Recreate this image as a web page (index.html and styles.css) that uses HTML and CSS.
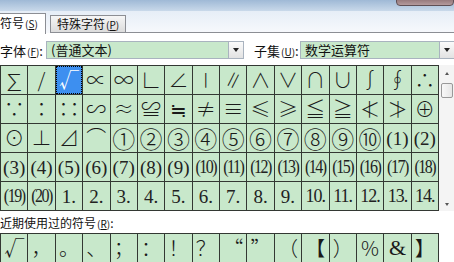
FILE: index.html
```html
<!DOCTYPE html>
<html>
<head>
<meta charset="utf-8">
<link rel="stylesheet" href="styles.css">
</head>
<body>
<div class="titlebar"><div class="closebtn"></div></div>
<div class="tabs">
  <div class="tab active">符号<span class="key">(<u>S</u>)</span></div>
  <div class="tab">特殊字符<span class="key">(<u>P</u>)</span></div>
  <div class="tabfill"></div>
</div>
<div class="panel">
  <div class="fontrow">
    <span class="lbl">字体<span class="key">(<u>F</u>)</span>:</span>
    <div class="combo c1"><div class="field">(普通文本)</div><div class="btn"><span class="tri"></span></div></div>
    <span class="lbl lbl2">子集<span class="key">(<u>U</u>)</span>:</span>
    <div class="combo c2"><div class="field">数学运算符</div><div class="btn"><span class="tri"></span></div></div>
  </div>
  <div class="gridwrap">
    <div class="grid">
      <div class="cell big">∑</div><div class="cell">/</div><div class="cell sel">√</div><div class="cell">∝</div><div class="cell">∞</div><div class="cell">∟</div><div class="cell">∠</div><div class="cell">∣</div><div class="cell">∥</div><div class="cell">∧</div><div class="cell">∨</div><div class="cell">∩</div><div class="cell">∪</div><div class="cell">∫</div><div class="cell">∮</div><div class="cell">∴</div>
      <div class="cell">∵</div><div class="cell">∶</div><div class="cell">∷</div><div class="cell">∽</div><div class="cell">≈</div><div class="cell">≌</div><div class="cell">≒</div><div class="cell">≠</div><div class="cell">≡</div><div class="cell">≤</div><div class="cell">≥</div><div class="cell">≦</div><div class="cell">≧</div><div class="cell">≮</div><div class="cell">≯</div><div class="cell">⊕</div>
      <div class="cell">⊙</div><div class="cell">⊥</div><div class="cell">⊿</div><div class="cell">⌒</div><div class="cell circ">①</div><div class="cell circ">②</div><div class="cell circ">③</div><div class="cell circ">④</div><div class="cell circ">⑤</div><div class="cell circ">⑥</div><div class="cell circ">⑦</div><div class="cell circ">⑧</div><div class="cell circ">⑨</div><div class="cell circ">⑩</div><div class="cell ser">(1)</div><div class="cell ser">(2)</div>
      <div class="cell ser">(3)</div><div class="cell ser">(4)</div><div class="cell ser">(5)</div><div class="cell ser">(6)</div><div class="cell ser">(7)</div><div class="cell ser">(8)</div><div class="cell ser">(9)</div><div class="cell ser nar"><span class="tall">(10)</span></div><div class="cell ser nar"><span class="tall">(11)</span></div><div class="cell ser nar"><span class="tall">(12)</span></div><div class="cell ser nar"><span class="tall">(13)</span></div><div class="cell ser nar"><span class="tall">(14)</span></div><div class="cell ser nar"><span class="tall">(15)</span></div><div class="cell ser nar"><span class="tall">(16)</span></div><div class="cell ser nar"><span class="tall">(17)</span></div><div class="cell ser nar"><span class="tall">(18)</span></div>
      <div class="cell ser nar"><span class="tall">(19)</span></div><div class="cell ser nar"><span class="tall">(20)</span></div><div class="cell ser">1.</div><div class="cell ser">2.</div><div class="cell ser">3.</div><div class="cell ser">4.</div><div class="cell ser">5.</div><div class="cell ser">6.</div><div class="cell ser">7.</div><div class="cell ser">8.</div><div class="cell ser">9.</div><div class="cell ser nar2">10.</div><div class="cell ser nar2">11.</div><div class="cell ser nar2">12.</div><div class="cell ser nar2">13.</div><div class="cell ser nar2">14.</div>
    </div>
    <div class="scroll">
      <div class="arrow up"></div>
      <div class="thumb"></div>
      <div class="track"></div>
      <div class="arrow down"></div>
    </div>
  </div>
  <div class="recentlbl">近期使用过的符号<span class="key">(<u>R</u>)</span>:</div>
  <div class="grid recent">
    <div class="cell">√</div><div class="cell">，</div><div class="cell">。</div><div class="cell">、</div><div class="cell">；</div><div class="cell">：</div><div class="cell">！</div><div class="cell">？</div><div class="cell">“</div><div class="cell">”</div><div class="cell">（</div><div class="cell">【</div><div class="cell">）</div><div class="cell">%</div><div class="cell amp">&amp;</div><div class="cell">】</div>
  </div>
</div>
</body>
</html>
```
FILE: styles.css
```css
html, body {
  margin: 0;
  padding: 0;
  width: 454px;
  height: 262px;
  overflow: hidden;
  background: #ffffff;
  font-family: "Noto Sans CJK SC", "DejaVu Sans", sans-serif;
}
.titlebar {
  height: 11px;
  background: linear-gradient(#9fb9d6, #c9d9ea);
  position: relative;
}
.closebtn {
  position: absolute;
  right: 0;
  top: -6px;
  width: 56px;
  height: 10px;
  border-radius: 0 0 4px 4px;
  background: linear-gradient(#7a5a5e, #b49a9c);
  border: 1px solid #5f4f55;
}
.tabs {
  height: 22px;
  display: flex;
  align-items: flex-end;
  background: linear-gradient(#e6eef7, #f7f9fc);
}
.tab {
  font-size: 12px;
  line-height: 16px;
  height: 16px;
  padding: 0 6px;
  margin-left: 4px;
  color: #111;
  background: linear-gradient(#f6f6f6, #dcdcdc);
  border: 1px solid #8c8e94;
  border-bottom: none;
  white-space: nowrap;
}
.tab.active {
  height: 20px;
  line-height: 18px;
  margin-left: 0;
  padding: 0 6px 0 0;
  width: 39px;
  background: #ffffff;
  border-left: none;
  position: relative;
  top: 1px;
  z-index: 1;
}
.tabfill {
  flex: 1;
  border-bottom: 1px solid #8c8e94;
}
.tab + .tab {
  border-bottom: 1px solid #8c8e94;
}
.key {
  font-size: 10px;
  margin-left: 1px;
}
.panel {
  background: #ffffff;
}
.fontrow {
  display: flex;
  align-items: center;
  height: 18px;
  margin-top: 8px;
}
.lbl {
  font-size: 13px;
  color: #111;
  width: 46px;
  white-space: nowrap;
}
.lbl2 {
  width: 46px;
  margin-left: 10px;
}
.combo {
  display: flex;
  height: 18px;
  box-sizing: border-box;
  border: 1px solid #a9b3bf;
}
.c1 { width: 198px; }
.c2 { flex: 1; border-right: none; }
.field {
  flex: 1;
  background: #c8e8cb;
  font-size: 13px;
  line-height: 16px;
  padding-left: 4px;
  color: #111;
  white-space: nowrap;
}
.btn {
  width: 14px;
  background: linear-gradient(#fafafa, #e2e2e2);
  border-left: 1px solid #a9b3bf;
  display: flex;
  align-items: center;
  justify-content: center;
}
.tri {
  width: 0;
  height: 0;
  border-left: 3px solid transparent;
  border-right: 3px solid transparent;
  border-top: 4px solid #222;
}
.gridwrap {
  display: flex;
  margin-top: 6px;
}
.grid {
  width: 439px;
  box-sizing: border-box;
  display: grid;
  grid-template-columns: repeat(16, 1fr);
  grid-auto-rows: 28px;
  gap: 1px;
  padding: 1px;
  background: #333833;
}
.cell {
  background: #c8e8cb;
  display: flex;
  align-items: center;
  justify-content: center;
  font-size: 20px;
  line-height: 1;
  font-weight: 300;
  color: #1a1a1a;
  white-space: nowrap;
}
.cell.big {
  font-size: 22px;
}
.cell.sel {
  background: #3d8ff0;
  color: #ffffff;
  outline: 1px dotted #000;
  outline-offset: -1px;
}
.cell.circ {
  font-size: 23px;
}
.cell.ser {
  font-family: "Liberation Serif", "DejaVu Serif", serif;
  font-size: 19px;
  font-weight: 400;
  color: #222;
}
.cell.nar {
  font-size: 16px;
  letter-spacing: -1.5px;
}
.tall {
  display: inline-block;
  transform: scaleY(1.2);
}
.cell.nar2 {
  font-size: 18px;
  letter-spacing: -1px;
}
.cell.amp {
  font-family: "Liberation Serif", serif;
  font-size: 22px;
}
.scroll {
  flex: 1;
  display: flex;
  flex-direction: column;
  align-items: center;
  background: #f4f4f4;
}
.arrow {
  width: 0;
  height: 0;
  border-left: 2px solid transparent;
  border-right: 2px solid transparent;
}
.arrow.up {
  border-bottom: 3px solid #555;
  margin-top: 7px;
}
.arrow.down {
  border-top: 3px solid #555;
  margin-bottom: 5px;
}
.thumb {
  width: 12px;
  height: 15px;
  margin-top: 8px;
  box-sizing: border-box;
  border: 1px solid #999;
  border-radius: 2px;
  background: linear-gradient(90deg, #f8f8f8, #e6e6e6);
}
.track {
  flex: 1;
}
.recentlbl {
  font-size: 12px;
  line-height: 16px;
  margin-top: 4px;
  height: 18px;
  color: #111;
}
.recent {
  margin-top: 0;
}
```
